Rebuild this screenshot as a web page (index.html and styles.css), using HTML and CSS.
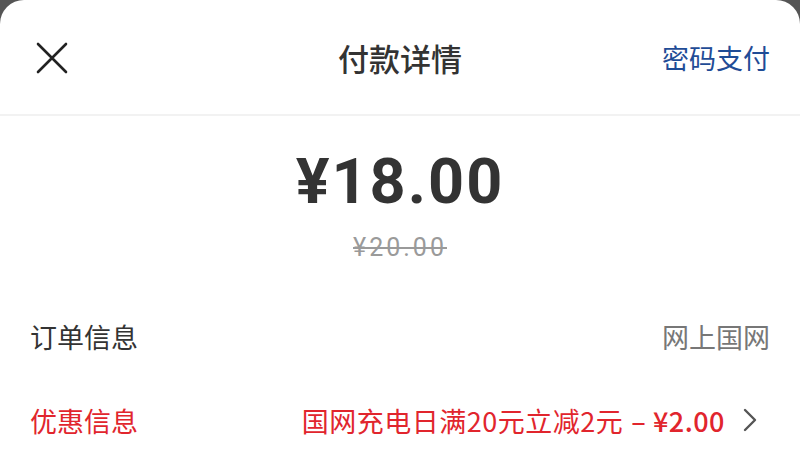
FILE: index.html
```html
<!DOCTYPE html>
<html lang="zh-CN">
<head>
    <meta charset="UTF-8">
    <meta name="viewport" content="width=device-width, initial-scale=1.0">
    <title>付款详情</title>
    <link rel="stylesheet" href="styles.css">
</head>
<body>
    <div class="sheet">
        <div class="header">
            <span class="close">
                <svg width="32" height="32" viewBox="0 0 32 32">
                    <path d="M2 2 L30 30 M30 2 L2 30" stroke="#222" stroke-width="2.6" fill="none" stroke-linecap="round"/>
                </svg>
            </span>
            <h2 class="title">付款详情</h2>
            <a class="pwd">密码支付</a>
        </div>

        <div class="amount">
            <div class="price">¥18.00</div>
            <div class="old-price">¥20.00</div>
        </div>

        <div class="row">
            <span class="label">订单信息</span>
            <span class="value">网上国网</span>
        </div>

        <div class="row discount">
            <span class="label">优惠信息</span>
            <span class="value">国网充电日满20元立减2元<span class="cut">–&nbsp;¥2.00</span>
                <svg class="arrow" width="14" height="24" viewBox="0 0 14 24">
                    <path d="M2 2 L12 12 L2 22" stroke="#555" stroke-width="2.4" fill="none" stroke-linecap="round" stroke-linejoin="round"/>
                </svg>
            </span>
        </div>
    </div>
</body>
</html>
```

FILE: styles.css
```css
body {
    margin: 0;
    background-color: #555555;
    font-family: "Noto Sans CJK SC", "Noto Sans", sans-serif;
    overflow: hidden;
}

.sheet {
    background-color: white;
    border-radius: 24px 24px 0 0;
    height: 456px;
}

.header {
    display: flex;
    align-items: center;
    justify-content: space-between;
    height: 114px;
    padding: 0 30px 0 36px;
    border-bottom: 2px solid #f2f2f2;
    position: relative;
}

.close {
    display: flex;
    width: 32px;
    height: 32px;
    margin-top: 2px;
}

.title {
    position: absolute;
    left: 0;
    right: 0;
    margin: 0;
    text-align: center;
    font-size: 31px;
    font-weight: 500;
    color: #333;
    pointer-events: none;
}

.pwd {
    font-size: 27px;
    color: #1f4c96;
}

.amount {
    text-align: center;
    padding-top: 26px;
    height: 152px;
}

.price {
    font-family: Roboto, sans-serif;
    font-weight: bold;
    font-size: 63px;
    letter-spacing: 2px;
    color: #333;
    line-height: 80px;
}

.old-price {
    display: inline-block;
    font-family: Roboto, sans-serif;
    font-size: 25px;
    letter-spacing: 3px;
    color: #9a9a9a;
    text-decoration: line-through;
    margin-top: 11px;
}

.row {
    display: flex;
    justify-content: space-between;
    align-items: center;
    height: 84px;
    padding: 0 30px;
    font-size: 27px;
}

.label {
    color: #333;
}

.value {
    color: #777;
    display: flex;
    align-items: center;
}

.discount .label,
.discount .value {
    color: #e1252d;
}

.discount .value {
    letter-spacing: 0.5px;
}

.cut {
    font-weight: 500;
    margin-left: 8px;
}

.arrow {
    margin-left: 18px;
    margin-right: 13px;
}
```
